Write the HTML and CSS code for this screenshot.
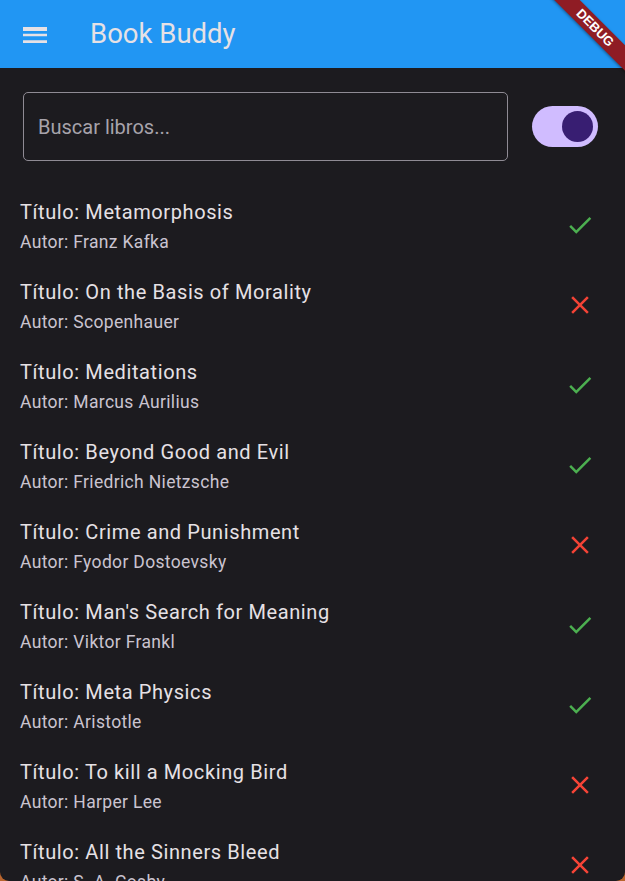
FILE: index.html
```html
<!DOCTYPE html>
<html lang="es">
<head>
<meta charset="utf-8">
<title>Book Buddy</title>
<link rel="stylesheet" href="styles.css">
</head>
<body>
<div class="screen">
  <header class="appbar">
    <svg class="menu" viewBox="0 0 24 24" width="32" height="32"><path fill="currentColor" d="M3 18h18v-2H3v2zm0-5h18v-2H3v2zm0-6v2h18V6H3z"/></svg>
    <h1 class="title">Book Buddy</h1>
  </header>
  <div class="search-row">
    <div class="search">Buscar libros...</div>
    <div class="switch"><div class="thumb"></div></div>
  </div>
  <ul class="list">
    <li class="item"><div class="text"><div class="t">Título: Metamorphosis</div><div class="s">Autor: Franz Kafka</div></div><svg class="ic ok" viewBox="0 0 24 24"><path d="M9 16.17L4.83 12l-1.42 1.41L9 19 21 7l-1.41-1.41z"/></svg></li>
    <li class="item"><div class="text"><div class="t">Título: On the Basis of Morality</div><div class="s">Autor: Scopenhauer</div></div><svg class="ic no" viewBox="0 0 24 24"><path d="M19 6.41L17.59 5 12 10.59 6.41 5 5 6.41 10.59 12 5 17.59 6.41 19 12 13.41 17.59 19 19 17.59 13.41 12z"/></svg></li>
    <li class="item"><div class="text"><div class="t">Título: Meditations</div><div class="s">Autor: Marcus Aurilius</div></div><svg class="ic ok" viewBox="0 0 24 24"><path d="M9 16.17L4.83 12l-1.42 1.41L9 19 21 7l-1.41-1.41z"/></svg></li>
    <li class="item"><div class="text"><div class="t">Título: Beyond Good and Evil</div><div class="s">Autor: Friedrich Nietzsche</div></div><svg class="ic ok" viewBox="0 0 24 24"><path d="M9 16.17L4.83 12l-1.42 1.41L9 19 21 7l-1.41-1.41z"/></svg></li>
    <li class="item"><div class="text"><div class="t">Título: Crime and Punishment</div><div class="s">Autor: Fyodor Dostoevsky</div></div><svg class="ic no" viewBox="0 0 24 24"><path d="M19 6.41L17.59 5 12 10.59 6.41 5 5 6.41 10.59 12 5 17.59 6.41 19 12 13.41 17.59 19 19 17.59 13.41 12z"/></svg></li>
    <li class="item"><div class="text"><div class="t">Título: Man's Search for Meaning</div><div class="s">Autor: Viktor Frankl</div></div><svg class="ic ok" viewBox="0 0 24 24"><path d="M9 16.17L4.83 12l-1.42 1.41L9 19 21 7l-1.41-1.41z"/></svg></li>
    <li class="item"><div class="text"><div class="t">Título: Meta Physics</div><div class="s">Autor: Aristotle</div></div><svg class="ic ok" viewBox="0 0 24 24"><path d="M9 16.17L4.83 12l-1.42 1.41L9 19 21 7l-1.41-1.41z"/></svg></li>
    <li class="item"><div class="text"><div class="t">Título: To kill a Mocking Bird</div><div class="s">Autor: Harper Lee</div></div><svg class="ic no" viewBox="0 0 24 24"><path d="M19 6.41L17.59 5 12 10.59 6.41 5 5 6.41 10.59 12 5 17.59 6.41 19 12 13.41 17.59 19 19 17.59 13.41 12z"/></svg></li>
    <li class="item"><div class="text"><div class="t">Título: All the Sinners Bleed</div><div class="s">Autor: S. A. Cosby</div></div><svg class="ic no" viewBox="0 0 24 24"><path d="M19 6.41L17.59 5 12 10.59 6.41 5 5 6.41 10.59 12 5 17.59 6.41 19 12 13.41 17.59 19 19 17.59 13.41 12z"/></svg></li>
  </ul>
  <div class="debug">DEBUG</div>
</div>
</body>
</html>
```
FILE: styles.css
```css
html, body {
  margin: 0;
  padding: 0;
  background: #b9652e;
  overflow: hidden;
}
body {
  font-family: Roboto, "Noto Sans", sans-serif;
}
.screen {
  position: relative;
  width: 625px;
  height: 881px;
  background: #1c1b1f;
  overflow: hidden;
  border-radius: 0 0 9px 9px;
}
.appbar {
  height: 68px;
  background: #2196f3;
  display: flex;
  align-items: center;
  color: #e6e1e5;
}
.menu {
  display: block;
  margin-left: 19px;
  margin-top: 2px;
}
.title {
  margin: 0 0 0 39px;
  font-size: 27.5px;
  line-height: 32px;
  font-weight: 400;
}
.search-row {
  display: flex;
  align-items: center;
  margin: 24px 27px 0 23px;
}
.search {
  box-sizing: border-box;
  width: 485px;
  height: 69px;
  border: 1.5px solid #8f8b94;
  border-radius: 5px;
  display: flex;
  align-items: center;
  padding-left: 14px;
  font-size: 20px;
  line-height: 28px;
  color: #a7a3ab;
}
.switch {
  margin-left: 24px;
  width: 66px;
  height: 41px;
  border-radius: 21px;
  background: #d0bcff;
  display: flex;
  align-items: center;
  justify-content: flex-end;
  padding-right: 5px;
  box-sizing: border-box;
}
.thumb {
  width: 31px;
  height: 31px;
  border-radius: 50%;
  background: #381e72;
}
.list {
  list-style: none;
  margin: 24px 0 0 0;
  padding: 0;
}
.item {
  height: 80px;
  display: flex;
  align-items: center;
  padding: 0 30px 0 20px;
  box-sizing: border-box;
}
.text {
  flex: 1;
  margin-top: 2px;
}
.t {
  font-size: 20px;
  line-height: 28px;
  color: #e6e1e5;
  letter-spacing: 0.6px;
}
.s {
  font-size: 17.5px;
  line-height: 24px;
  margin-top: 4px;
  color: #cac4d0;
  letter-spacing: 0.33px;
}
.ic {
  width: 30px;
  height: 30px;
  display: block;
}
.ic.ok { fill: #4caf50; }
.ic.no { fill: #f44336; }
.debug {
  position: absolute;
  top: 19px;
  left: 533px;
  width: 124px;
  height: 18px;
  line-height: 18px;
  background: #8f1c24;
  color: #fff;
  font-size: 13px;
  font-weight: 700;
  text-align: center;
  transform: rotate(45deg);
  box-shadow: 0 1px 3px rgba(0,0,0,0.4);
  font-family: "Liberation Sans", Arial, sans-serif;
}
```
